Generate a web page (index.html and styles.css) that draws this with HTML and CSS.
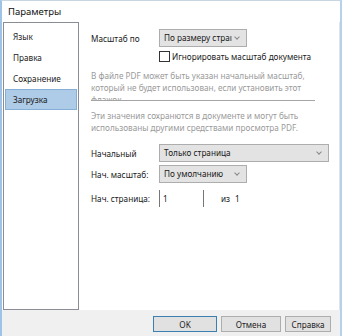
FILE: index.html
```html
<!DOCTYPE html>
<html lang="ru">
<head>
  <meta charset="UTF-8">
  <title>Параметры</title>
  <link rel="stylesheet" href="styles.css">
</head>
<body>
  <div class="window">
    <div class="titlebar">Параметры</div>
    <div class="main">
      <ul class="nav">
        <li>Язык</li>
        <li>Правка</li>
        <li>Сохранение</li>
        <li class="active">Загрузка</li>
      </ul>
      <div class="panel">
        <div class="row first">
          <span class="label">Масштаб по</span>
          <div class="select short">По размеру страı<span class="arrow"></span></div>
        </div>
        <div class="row check">
          <span class="box"></span>
          <span>Игнорировать масштаб документа</span>
        </div>
        <p class="note clipped">В файле PDF может быть указан начальный масштаб, который не будет использован, если установить этот флажок.</p>
        <p class="note">Эти значения сохранются в документе и могут быть использованы другими средствами просмотра PDF.</p>
        <div class="row">
          <span class="label">Начальный</span>
          <div class="select long">Только страница<span class="arrow"></span></div>
        </div>
        <div class="row">
          <span class="label">Нач. масштаб:</span>
          <div class="select short">По умолчанию<span class="arrow"></span></div>
        </div>
        <div class="row last">
          <span class="label">Нач. страница:</span>
          <div class="page">1</div>
          <span class="of">из</span>
          <span>1</span>
        </div>
      </div>
    </div>
    <div class="footer">
      <button class="btn default">OK</button>
      <button class="btn">Отмена</button>
      <button class="btn narrow">Справка</button>
    </div>
  </div>
</body>
</html>
```

FILE: styles.css
```css
* {
  margin: 0;
  padding: 0;
  box-sizing: border-box;
}

body {
  font-family: "Noto Sans", "Open Sans", sans-serif;
  font-size: 8.2px;
  color: #1a1a1a;
  background: #fff;
}

.window {
  width: 342px;
  height: 336px;
  display: flex;
  flex-direction: column;
  border-left: 2px solid #9fc3e6;
  border-right: 2px solid #b5d1ec;
  border-top: 1px solid #c7d6e3;
  background: #fff;
}

.titlebar {
  height: 21px;
  padding: 4px 0 0 6px;
  font-size: 9.5px;
  color: #111;
}

.main {
  height: 288px;
  display: flex;
  padding-left: 1px;
}

.nav {
  width: 76px;
  list-style: none;
  border: 1px solid #8a8d93;
  padding: 3px 1px 0;
}

.nav li {
  height: 21px;
  line-height: 21px;
  padding-left: 8px;
  color: #222;
}

.nav li.active {
  background: #aecbe7;
  border: 1px solid #86afd8;
  line-height: 19px;
  padding-left: 7px;
}

.panel {
  flex: 1;
  padding: 7px 0 0 12px;
  border-right: 1px solid #e2e2e2;
}

.row {
  display: flex;
  align-items: center;
  height: 18px;
  margin-bottom: 3px;
}

.row .label {
  width: 68px;
}

.row.check {
  padding-left: 68px;
  margin: 5px 0 7px;
  height: 13px;
}

.box {
  width: 11px;
  height: 11px;
  border: 1px solid #333;
  margin-right: 2px;
  background: #fff;
}

.select {
  height: 18px;
  line-height: 16px;
  border: 1px solid #adadad;
  background: #e3e3e3;
  padding-left: 4px;
  position: relative;
  white-space: nowrap;
  overflow: hidden;
}

.select.short {
  width: 88px;
}

.select.long {
  width: 170px;
}

.arrow {
  position: absolute;
  right: 7px;
  top: 5px;
  width: 4px;
  height: 4px;
  border-right: 1px solid #888;
  border-bottom: 1px solid #888;
  transform: rotate(45deg);
}

.note {
  width: 224px;
  color: #9a9a9a;
  line-height: 12px;
}

.note.clipped {
  height: 31px;
  overflow: hidden;
  border-bottom: 1px solid #a5a5a5;
  margin-bottom: 9px;
}

.note + .note {
  margin-bottom: 10px;
}

.row + .row {
  margin-top: 3px;
}

.row.last {
  margin-top: 6px;
}

.page {
  width: 45px;
  height: 17px;
  line-height: 17px;
  border-left: 1px solid #777;
  border-right: 1px solid #777;
  padding-left: 3px;
}

.of {
  margin: 0 5px 0 17px;
}

.footer {
  flex: 1;
  background: #f0f0f0;
  display: flex;
  justify-content: flex-end;
  align-items: center;
  gap: 4px;
  padding: 2px 9px 0 0;
}

.btn {
  width: 60px;
  height: 16px;
  font-family: inherit;
  font-size: 8.2px;
  color: #222;
  background: #e1e1e1;
  border: 1px solid #adadad;
}

.btn.default {
  width: 64px;
  border-color: #3c7fb1;
}

.btn.narrow {
  width: 46px;
}
```
